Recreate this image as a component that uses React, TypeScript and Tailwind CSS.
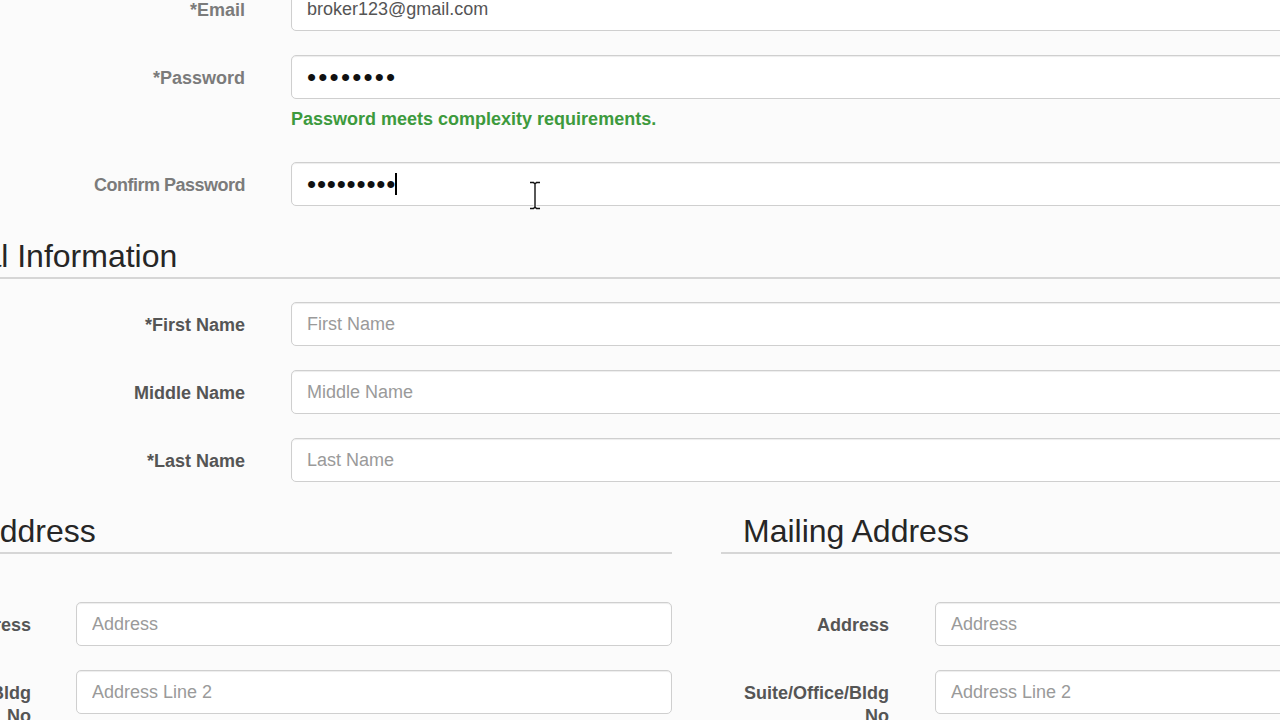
const inputBox =
  "h-[44px] w-full rounded-[5px] border border-[#cfcfcf] bg-white px-[15px] text-[18px] text-[#555] shadow-[inset_0_1px_1px_rgba(0,0,0,0.075)] outline-none placeholder:text-[#9a9a9a]";

function FieldRow({
  label,
  tone = "text-[#555] text-[18px]",
  children,
}: {
  label: string;
  tone?: string;
  children: React.ReactNode;
}) {
  return (
    <div className="flex items-start">
      <div className={`w-[245px] shrink-0 whitespace-nowrap pt-[12px] text-right font-bold leading-[23px] ${tone}`}>
        {label}
      </div>
      <div className="ml-[46px] w-[1000px] shrink-0">{children}</div>
    </div>
  );
}

function Legend({ text, shift }: { text: string; shift: string }) {
  return (
    <div className="flex border-b-2 border-[#d6d6d6] pb-[2px]">
      <h2 className={`shrink-0 whitespace-nowrap text-[32px] font-normal leading-[38px] text-[#262626] ${shift}`}>
        {text}
      </h2>
    </div>
  );
}

function Dots({ count, spacing, caret }: { count: number; spacing: string; caret?: boolean }) {
  return (
    <div className="flex h-full items-center">
      <span className={`text-[26px] leading-none text-[#111] ${spacing}`}>{"•".repeat(count)}</span>
      {caret && <span className="-ml-[1px] h-[22px] w-[2px] bg-black" />}
    </div>
  );
}

function AddressRow({
  label,
  placeholder,
  labelBox,
  inputWidth,
}: {
  label: React.ReactNode;
  placeholder: string;
  labelBox: string;
  inputWidth: string;
}) {
  return (
    <div className="flex items-start">
      <div className={`flex shrink-0 justify-end ${labelBox}`}>
        <div className="w-[168px] shrink-0 pt-[12px] text-right text-[18px] font-bold leading-[23px] text-[#555]">
          {label}
        </div>
      </div>
      <div className={`shrink-0 ${inputWidth}`}>
        <input className={inputBox} placeholder={placeholder} />
      </div>
    </div>
  );
}

const suiteLabel = (
  <>
    Suite/Office/Bldg
    <br />
    No
  </>
);

export default function App() {
  return (
    <div className="relative h-[720px] w-[1280px] overflow-hidden bg-[#fbfbfb] font-['Liberation_Sans',Arial,sans-serif]">
      <div className="-mt-[13px]">
        <FieldRow label="*Email" tone="text-[#7b7b7b] text-[18px]">
          <input className={inputBox} defaultValue="broker123@gmail.com" />
        </FieldRow>

        <div className="mt-[24px]">
          <FieldRow label="*Password" tone="text-[#7b7b7b] text-[18px]">
            <div className={inputBox}>
              <Dots count={8} spacing="tracking-[2.2px]" />
            </div>
          </FieldRow>
        </div>

        <div className="ml-[291px] mt-[9px] text-[18px] font-bold leading-[22px] text-[#3d9a3d]">
          Password meets complexity requirements.
        </div>

        <div className="mt-[32px]">
          <FieldRow label="Confirm Password" tone="text-[#7b7b7b] text-[18px] tracking-[-0.5px]">
            <div className={`${inputBox} border-[#8ec0e6] shadow-[inset_0_1px_1px_rgba(0,0,0,0.075),0_0_6px_rgba(102,175,233,0.55)]`}>
              <Dots count={9} spacing="tracking-[0.8px]" caret />
            </div>
          </FieldRow>
        </div>

        <div className="mt-[31px]">
          <Legend text="Personal Information" shift="-ml-[118px]" />
        </div>

        <div className="mt-[23px] flex flex-col gap-[24px]">
          <FieldRow label="*First Name">
            <input className={inputBox} placeholder="First Name" />
          </FieldRow>
          <FieldRow label="Middle Name">
            <input className={inputBox} placeholder="Middle Name" />
          </FieldRow>
          <FieldRow label="*Last Name">
            <input className={inputBox} placeholder="Last Name" />
          </FieldRow>
        </div>

        <div className="mt-[30px] flex gap-[49px]">
          <div className="w-[672px] shrink-0">
            <Legend text="Physical Address" shift="-ml-[148px]" />
            <div className="mt-[48px] flex flex-col gap-[24px]">
              <AddressRow label="Address" placeholder="Address" labelBox="w-[31px]" inputWidth="ml-[45px] w-[596px]" />
              <AddressRow label={suiteLabel} placeholder="Address Line 2" labelBox="w-[31px]" inputWidth="ml-[45px] w-[596px]" />
            </div>
          </div>

          <div className="w-[760px] shrink-0">
            <Legend text="Mailing Address" shift="ml-[22px]" />
            <div className="mt-[48px] flex flex-col gap-[24px]">
              <AddressRow label="Address" placeholder="Address" labelBox="w-[168px]" inputWidth="ml-[46px] w-[560px]" />
              <AddressRow label={suiteLabel} placeholder="Address Line 2" labelBox="w-[168px]" inputWidth="ml-[46px] w-[560px]" />
            </div>
          </div>
        </div>
      </div>

      {/* mouse pointer (text I-beam) */}
      <svg className="absolute left-[529px] top-[181px]" width="12" height="29" viewBox="0 0 12 29">
        <path d="M1 1.5h3.5L6 3l1.5-1.5H11M6 3v23M1 27.5h3.5L6 26l1.5 1.5H11" fill="none" stroke="#fff" strokeWidth="3" />
        <path d="M1 1.5h3.5L6 3l1.5-1.5H11M6 3v23M1 27.5h3.5L6 26l1.5 1.5H11" fill="none" stroke="#111" strokeWidth="1.4" />
      </svg>
    </div>
  );
}
